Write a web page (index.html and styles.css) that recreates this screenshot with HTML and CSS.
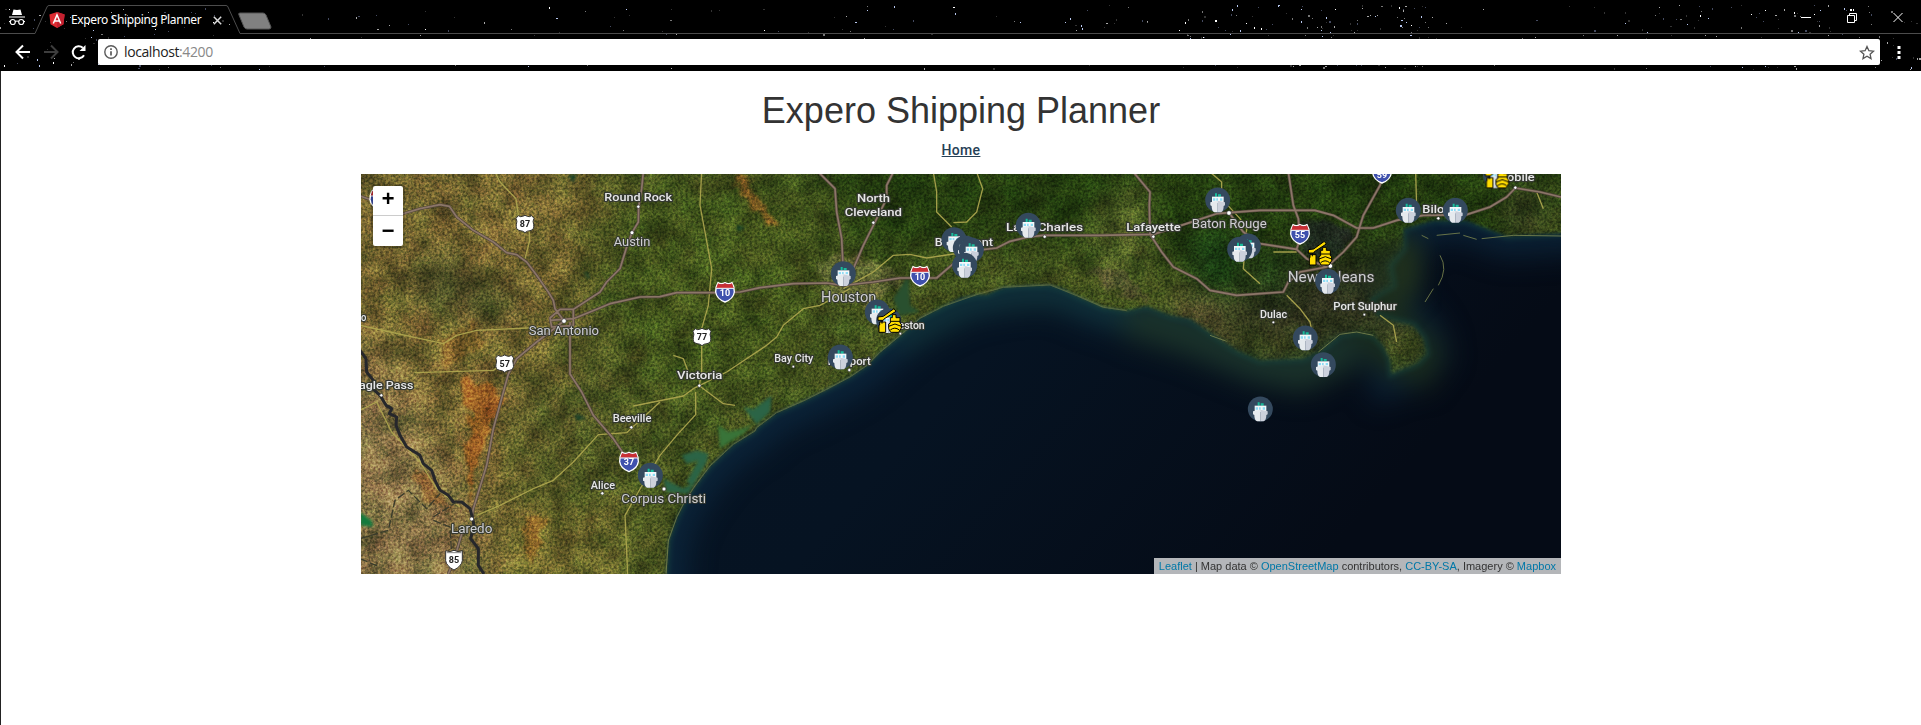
FILE: index.html
```html
<!DOCTYPE html>
<html lang="en">
<head>
<meta charset="utf-8">
<title>Expero Shipping Planner</title>
<link rel="stylesheet" href="styles.css">
</head>
<body>
<header class="browser">
  <svg class="stars" id="stars" width="1921" height="71"></svg>
  <div class="tabstrip">
    <svg class="tab-line" width="1921" height="35"><path d="M0 33.5H35L47 7Q47.500 5.500 49 5.500H226Q227.500 5.500 228 7L240 33.500H1921" fill="none" stroke="#4c4c4c"/></svg>
    <svg class="incognito" width="18" height="18" viewBox="0 0 18 18"><path d="M5.500 0.500 9 1 12.500 0.500 14 6H4ZM1 7.500H17V8.500H1Z" fill="#fff"/><g fill="none" stroke="#fff" stroke-width="1.200"><circle cx="4.800" cy="13" r="2.500"/><circle cx="13.200" cy="13" r="2.500"/><path d="M1 12.500H2.300M7.300 12.500Q9 11.500 10.700 12.500M15.700 12.500H17"/></g></svg>
    <svg class="angular" width="16" height="16" viewBox="0 0 16 16"><path d="M8 0 15.600 2.600 14.500 12.200 8 16 1.500 12.200.4 2.600Z" fill="#dd2b31"/><path d="M8 0 15.600 2.600 14.500 12.200 8 16Z" fill="#c3202f"/><path d="M4.300 11.500 8 3 11.700 11.500M5.800 9H10.200" fill="none" stroke="#fff" stroke-width="1.500"/></svg>
    <span class="tab-title">Expero Shipping Planner</span>
    <svg class="tab-close" width="9" height="9"><path d="M.8.800 8.200 8.200M8.200.800.8 8.200" stroke="#ddd" stroke-width="1.500"/></svg>
    <svg class="new-tab" width="34" height="18"><path d="M2 1H25Q27 1 28 3L33 15Q33 17 31 17H9Q7 17 6 15L1 3Q0 1 2 1Z" fill="#808080" stroke="#555"/></svg>
    <svg class="window-buttons" width="104" height="12" fill="none" stroke="#fff"><path d="M0 5.500H10M46.500 3.500H53.500V10.500H46.500ZM48.500 3V1.500H55.500V8.500H54M92.500 1 101.500 10M101.500 1 92.500 10"/></svg>
  </div>
  <div class="toolbar">
    <svg class="nav" width="76" height="18" fill="none" stroke-width="2"><path d="M15 9H2M8 2.500 1.500 9 8 15.500" stroke="#fff"/><path d="M29 9H42M36 2.500 42.500 9 36 15.500" stroke="#3d3d3d"/><path d="M69 12.200A6 6 0 1 1 67.800 4.800" stroke="#fff"/><path d="M70.500 2V8H64.500Z" fill="#fff"/></svg>
    <div class="omnibox">
      <svg width="14" height="14" fill="none" stroke="#5a5a5a"><circle cx="7" cy="7" r="6.200" stroke-width="1.400"/><path d="M7 6.200V10.500M7 3.200V4.900" stroke-width="1.700"/></svg>
      <span class="url">localhost<span class="port">:4200</span></span>
      <svg class="bookmark" width="16" height="15" viewBox="0 0 16 15"><path d="M8 1.500 9.900 5.700 14.500 6.200 11.100 9.200 12 13.600 8 11.300 4 13.600 4.900 9.200 1.500 6.200 6.100 5.700Z" fill="none" stroke="#555" stroke-width="1.300"/></svg>
    </div>
    <svg class="menu" width="4" height="14"><path d="M.5 1H3.500V4H.5ZM.5 6H3.500V9H.5ZM.5 11H3.500V14H.5Z" fill="#fff"/></svg>
  </div>
</header>

<main class="page">
  <h1>Expero Shipping Planner</h1>
  <nav><a class="home" href="#">Home</a></nav>
  <section class="map">
    <svg class="tiles" width="1200" height="400" viewBox="3 6 3600 1200" color-interpolation-filters="sRGB">
      <defs>
        <filter id="b4" x="-5%" y="-5%" width="110%" height="110%"><feGaussianBlur stdDeviation="4"/></filter>
        <filter id="b10" x="-30%" y="-30%" width="160%" height="160%"><feGaussianBlur stdDeviation="8"/></filter>
        <filter id="b25" x="-30%" y="-30%" width="160%" height="160%"><feGaussianBlur stdDeviation="25"/></filter>
        <filter id="b40" x="-50%" y="-50%" width="200%" height="200%"><feGaussianBlur stdDeviation="40"/></filter>
        <filter id="b80" x="-50%" y="-50%" width="200%" height="200%"><feGaussianBlur stdDeviation="75"/></filter>
        <filter id="grain" x="0" y="0" width="100%" height="100%"><feTurbulence type="fractalNoise" baseFrequency=".13" numOctaves="3" seed="4"/><feColorMatrix values="2 0 0 0 -.5  1.700 .3 0 0 -.5  1.700 0 .3 0 -.5  0 0 0 0 1"/></filter>
        <filter id="patches" x="0" y="0" width="100%" height="100%"><feTurbulence type="fractalNoise" baseFrequency=".014" numOctaves="6" seed="9"/><feColorMatrix values="1.500 .5 0 0 -.47  1.500 0 0 0 -.22  1.500 .3 0 0 -.45  0 0 0 0 1"/></filter>
        <filter id="rough" x="-10%" y="-10%" width="120%" height="120%"><feTurbulence type="fractalNoise" baseFrequency=".03" numOctaves="4" seed="2"/><feDisplacementMap in="SourceGraphic" scale="50" xChannelSelector="R" yChannelSelector="G"/><feGaussianBlur stdDeviation="4"/></filter>
        <linearGradient id="sea" x1="0" x2="1" y2=".3"><stop offset="0" stop-color="#071525"/><stop offset=".6" stop-color="#061322"/><stop offset="1" stop-color="#050b16"/></linearGradient>
        <path id="coast" d="M918 1206 925 1106 950 1036 975 986 1005 941 1050 881 1120 816 1185 776 1190 766 1250 721 1330 686 1400 651 1470 614 1520 580 1560 540 1620 490 1680 438 1750 402 1800 378 1850 367 1880 367 1930 345 2000 340 2070 338 2110 350 2150 370 2230 405 2300 415 2360 402 2430 430 2490 440 2540 475 2630 535 2700 565 2830 560 2880 538 2940 487 2990 480 3040 490 3070 520 3090 560 3095 605 3130 590 3170 575 3200 545 3190 500 3160 460 3100 445 3050 430 3030 380 3100 340 3090 280 3130 230 3130 170 3220 145 3320 145 3390 173 3440 192 3650 180V-50H-50V1250H918Z"/>
        <mask id="land" maskUnits="userSpaceOnUse" x="0" y="0" width="3606" height="1212">
          <use href="#coast" fill="#fff" filter="url(#b4)"/>
          <path d="M3040 250 3280 150 3280 400 3100 420 3000 360Z" opacity=".75" filter="url(#b25)"/>
          <path d="M2380 440 2550 530 2700 590 2850 580 2920 520 3060 510" fill="none" stroke="#000" stroke-width="55" opacity=".5" filter="url(#b25)"/>
          <path d="M3080 620 3180 590 3240 540 3200 440 3060 430" fill="none" stroke="#000" stroke-width="55" opacity=".6" filter="url(#b25)"/>
        </mask>
        <g id="us"><path d="M-20-25Q-13-20-7-23L0-26 7-23Q13-20 20-25L27-17Q22-9 26 2 29 17 15 20 7 20 0 26-7 20-15 20-29 17-26 2-22-9-27-17Z" fill="#fff" stroke="#333" stroke-width="3"/></g>
        <g id="inter"><path d="M-21-28Q-11-22 0-28 11-22 21-28 29-14 28 0 25 21 0 30-25 21-28 0-29-14-21-28Z" fill="#3f51ad" stroke="#fff" stroke-width="4"/><path d="M-21-26Q-11-20 0-26 11-20 21-26L26-12H-26Z" fill="#c92f34"/><path d="M-26-11H26" stroke="#fff" stroke-width="3"/></g>
        <g id="ship"><circle r="37.500" fill="#34495e"/><path d="M-8-20H-2V-10H-8ZM1-17H10V-10H1Z" fill="#1abc9c"/><path d="M-17-10H18V9H-17Z" fill="#f4f8fa"/><path d="M-14-5H-7V2H-14ZM-4-5H1V2H-4ZM7-5H14V2H7Z" fill="#8edcf5"/><path d="M-22 7 0 2V37H-10Q-18 34-18 18L-22 16Z" fill="#e6eaee"/><path d="M22 7 0 2V37H10Q18 34 18 18L22 16Z" fill="#ccd1dc"/></g>
        <g id="crane" stroke="#000" stroke-width="3" fill="#fd0"><path d="M-34-11-18-13 14-36 20-28-16-5-18-1H-34Z"/><path d="M-29 4H-11V35H-31V13H-29Z"/><path d="M-22-1V9" fill="none"/><path d="M9-18H20V-9H32V7L36 10V22L28 35H4L-2 24V10L3 7V-9H9Z"/><path d="M3 2H32M-2 17 17 10 36 17M3 28Q16 17 30 28" fill="none"/></g>
      </defs>
      <rect x="0" width="3606" height="1212" fill="url(#sea)"/>
      <g fill="none" filter="url(#b40)">
        <use href="#coast" stroke="#0f3048" stroke-width="130" opacity=".55"/>
        <path d="M1600 510 1850 380 2080 360 2300 430" stroke="#16403c" stroke-width="90" opacity=".5"/>
        <path d="M2300 430 2500 490 2700 570 2820 595 2980 520" stroke="#1d3629" stroke-width="130" opacity=".85"/>
        <path d="M3080 190 3030 430 3150 550 3120 620" stroke="#1c2d1c" stroke-width="180" opacity=".9"/>
      </g>
      <path d="M3050 230 3170 200 3180 340 3070 440Z" fill="#20301d" filter="url(#b40)"/>
      <use href="#coast" fill="none" stroke="#1d4f46" stroke-width="22" filter="url(#b10)" opacity=".4"/>
      <g mask="url(#land)">
        <rect width="3606" height="1212" fill="#414f1e"/>
        <g filter="url(#b80)">
          <path d="M-100-100H750L650 400 600 720 400 1300H-100Z" fill="#706230"/>
          <path d="M-100 500 100 600 330 1020 350 1300H-100Z" fill="#837048"/>
          <path d="M450 1000H820L800 1300H400Z" fill="#6c672e"/>
          <path d="M520 570 820 560 800 900 430 930Z" fill="#505525"/>
          <path d="M1350-100H3700V220L2600 300 1900 200 1500 280Z" fill="#21390f"/>
          <path d="M2850 250H3150V520H2700L2450 430Z" fill="#292d1c"/>
          <path d="M750 100 1100 0 1400 100 1300 600 850 700Z" fill="#40521c"/>
        </g>
        <g filter="url(#b40)">
          <path d="M140 290 250 230 400 340 540 400 400 450 180 410Z" fill="#404422" opacity=".85"/>
          <path d="M2250 60 2370 40 2360 360 2220 350 2180 180Z" fill="#4e5d26"/>
          <path d="M2420 350 2540 400 2640 480 2520 470Z" fill="#5c4a33"/>
          <path d="M2480 180 2620 170 2650 360 2500 350Z" fill="#183b13"/>
          <path d="M3460 40 3500 40 3530 190 3440 190Z" fill="#343620"/>
          <path d="M3540 60H3600V180H3550Z" fill="#4f5a28"/>
          <path d="M2700 250 2780 250 2760 360 2690 340Z" fill="#1b4015"/>
        </g>
        <g filter="url(#rough)">
          <path d="M1370 270 1480 250 1540 270 1600 290 1640 350 1590 350 1540 410 1460 380 1400 360Z" fill="#86824f" opacity=".45"/>
          <path d="M2830 150 2900 145 2960 165 2980 190 2930 245 2890 260 2830 235 2810 190Z" fill="#1f2b20"/>
          <path d="M305 625 400 640 430 690 390 770 350 880 330 1000 320 850 335 740 310 690Z" fill="#9c5a22" opacity=".8"/>
          <path d="M155 880 210 910 270 1010 190 980Z" fill="#95592a" opacity=".55"/>
          <path d="M490 1040 560 1030 520 1180 490 1130Z" fill="#94551f" opacity=".45"/>
          <path d="M1125 0 1150 80 1190 115 1220 150 1250 160 1240 135 1195 90 1155 10Z" fill="#8b5a23" opacity=".7"/>
          <path d="M240 500 340 450 370 520 250 600Z" fill="#865a26" opacity=".45"/>
          <path d="M2180 290 2300 300 2370 390 2250 360Z" fill="#4a4030" opacity=".5"/>
        </g>
        <rect class="patches" width="3606" height="1212" filter="url(#patches)"/>
        <rect class="grain" width="3606" height="1212" filter="url(#grain)"/>
        <g fill="#2b6446" filter="url(#b4)">
          <path d="M1150 705 1180 712 1235 670 1230 720 1190 757Z"/><path d="M1075 760 1105 780 1150 770 1180 755 1150 785 1110 810 1080 830Z" fill="#397439"/>
          <path d="M965 850 1010 835 1045 845 1040 870 1000 940 980 930 1015 865 980 875Z"/><path d="M910 920 970 950 1005 930 985 965 920 960Z"/>
          <path d="M1600 380 1645 310 1650 400 1680 420 1620 430Z" fill="#29502f"/><path d="M0 1020 35 1045 40 1065 0 1060Z" fill="#137a3d"/><path d="M625 10 650 5 640 32ZM645 725 680 738 650 745ZM1130 160 1155 165 1135 178ZM670 295 690 310 685 322Z" fill="#153e28"/>
        </g>
      </g>
      <path d="M918 1206 925 1106 950 1036 975 986 1005 941 1050 881 1120 816 1185 776 1190 766 1250 721 1330 686 1400 651 1470 614 1520 580 1560 540 1620 490 1680 438 1750 402 1850 367 1930 345 2070 338 2150 370 2230 405 2300 415" class="shore"/>
      <path d="M2875 540 2940 487 2990 480 3040 490M3185 190 3205 200M3230 190 3300 183M3310 190 3350 202M3365 200 3460 190 3603 192M3240 250Q3265 290 3235 340M3220 350 3195 390M2550 490 2600 508" class="shore"/>

      <g class="road minor">
        <path d="M405 0 420 30 468 80 475 130 508 180 508 210 495 260M0 460 90 480 250 515 290 490 350 475 500 468 560 465M165 602 400 595 430 575M1025 0 1020 100 1035 180 1055 290 1045 400 1025 470 1025 600 1018 641M820 702 970 672 1000 650 1018 641 1090 695 1125 700M1007 660V728L950 790 900 850 840 951 795 1030 803 1206M350 1030 420 1000 520 950 580 925 640 870 715 788 800 782 900 690"/>
        <path d="M0 715 50 690 95 780 180 870 230 950 300 1005M1450 350 1540 300 1600 250 1650 247 1700 258 1800 243M1470 350 1380 400 1330 410 1270 460 1250 495 1220 520 1100 600 1018 641M940 550 970 560 985 600M1720 0 1730 60V120L1775 165M1850 0 1868 50 1850 120 1820 150 1780 152M2550 0 2585 30V80L2640 140 2660 170 2650 290 2700 335M3167 0 3170 110M2740 240H2810M2780 370 2820 410 2850 450 2860 500M3060 430 3100 460 3110 510M3530 60 3550 110"/>
      </g>
      <g class="road case"><path id="major" d="M0 72 60 92 130 125 180 110 240 98 268 103 290 135 340 175 400 210 440 242 470 248 500 270 530 310 565 360 580 385 585 410 612 447M850 0 845 50 836 104 835 150 816 182 800 225 780 290 740 330 720 360 640 412H600L570 438 575 465 640 460V412M570 445 640 440 690 420 750 395 840 375 900 374 950 362 1060 362 1140 360 1200 347 1300 335 1400 333 1450 340 1540 330 1620 318H1730L1780 275 1850 235 1910 228 1950 208 2005 195 2050 190H2220L2380 187 2480 155 2570 125 2607 122 2700 115H2865L2920 130 2990 168H3040L3110 145 3190 130 3320 128 3390 105 3440 75 3466 48 3540 60 3603 75M2320 0 2370 60 2368 100 2370 187 2405 240 2440 285 2510 320 2550 355 2630 370 2700 365 2770 360 2785 330 2820 300 2900 285M2607 122 2650 180 2700 215 2810 232 2840 260 2900 285 2950 240 2990 195 2998 168 3010 130 3060 40 3070 0M2785 0 2800 100 2815 140 2820 200 2810 232M630 450V606L665 660 700 730 760 800 807 869M612 447 530 510 470 560 445 606 400 770 380 880 340 1010 335 1040M310 1070 282 1163 265 1206M1375 0 1425 50 1430 120 1445 200 1450 300M1600 0 1580 40V80L1540 160 1510 220 1480 290"/></g>
      <use href="#major" class="road major"/>
      <path class="road river" d="M0 535 18 560 20 600 40 625 38 650 60 670 78 700 95 710 88 725 110 735 108 760 120 790 140 825 180 850 190 875 215 895 225 925 240 955 265 970 280 990 305 990 330 1010 338 1040 342 1060 332 1100 355 1130 355 1180 372 1206"/>
      <path d="M0 1100 85 1075 105 985 145 955 200 1010 240 965M220 1035 290 990M220 1045 270 1065 275 1150M0 1160 60 1185" fill="none" stroke="#393b2b" stroke-width="4" stroke-dasharray="24 8"/>

      <g class="dots"><circle cx="835" cy="104" r="5"/><circle cx="816" cy="182" r="6"/><circle cx="612" cy="447" r="7"/><circle cx="64" cy="670" r="5"/><circle cx="335" cy="1041" r="6"/><circle cx="814" cy="766" r="5"/><circle cx="727" cy="964" r="5"/><circle cx="912" cy="951" r="6"/><circle cx="1018" cy="641" r="5"/><circle cx="1540" cy="152" r="5"/><circle cx="1300" cy="584" r="4"/><circle cx="1468" cy="594" r="5"/><circle cx="1621" cy="485" r="4"/><circle cx="2054" cy="194" r="5"/><circle cx="2380" cy="194" r="5"/><circle cx="2607" cy="123" r="7"/><circle cx="2911" cy="282" r="7"/><circle cx="3235" cy="139" r="5"/><circle cx="3466" cy="47" r="5"/><circle cx="3013" cy="428" r="4"/><circle cx="2740" cy="451" r="4"/></g>
      <g class="town">
        <text x="733" y="87" textLength="203" lengthAdjust="spacingAndGlyphs">Round Rock</text><text x="1491" y="89" textLength="99" lengthAdjust="spacingAndGlyphs">North</text><text x="1454" y="133" textLength="172" lengthAdjust="spacingAndGlyphs">Cleveland</text>
        <text x="-70" y="447" textLength="89" lengthAdjust="spacingAndGlyphs">Del Rio</text><text x="-24" y="652" textLength="184" lengthAdjust="spacingAndGlyphs">Eagle Pass</text><text x="758" y="750" textLength="116" lengthAdjust="spacingAndGlyphs">Beeville</text><text x="692" y="951" textLength="73" lengthAdjust="spacingAndGlyphs">Alice</text>
        <text x="951" y="620" textLength="136" lengthAdjust="spacingAndGlyphs">Victoria</text><text x="1243" y="570" textLength="117" lengthAdjust="spacingAndGlyphs">Bay City</text><text x="1403" y="578" textLength="129" lengthAdjust="spacingAndGlyphs">Freeport</text><text x="1554" y="470" textLength="140" lengthAdjust="spacingAndGlyphs">Galveston</text>
        <text x="1724" y="221" textLength="175" lengthAdjust="spacingAndGlyphs">Beaumont</text><text x="1938" y="177" textLength="231" lengthAdjust="spacingAndGlyphs">Lake Charles</text><text x="2299" y="177" textLength="163" lengthAdjust="spacingAndGlyphs">Lafayette</text>
        <text x="3187" y="123" textLength="94" lengthAdjust="spacingAndGlyphs">Biloxi</text><text x="3408" y="27" textLength="116" lengthAdjust="spacingAndGlyphs">Mobile</text><text x="2920" y="414" textLength="190" lengthAdjust="spacingAndGlyphs">Port Sulphur</text><text x="2700" y="437" textLength="81" lengthAdjust="spacingAndGlyphs">Dulac</text>
      </g>
      <g class="city">
        <text x="761" y="222" textLength="110" lengthAdjust="spacingAndGlyphs">Austin</text><text x="506" y="488" textLength="211" lengthAdjust="spacingAndGlyphs">San Antonio</text><text x="273" y="1084" textLength="124" lengthAdjust="spacingAndGlyphs">Laredo</text><text x="784" y="994" textLength="254" lengthAdjust="spacingAndGlyphs">Corpus Christi</text><text x="2495" y="167" textLength="225" lengthAdjust="spacingAndGlyphs">Baton Rouge</text>
        <text class="metro" x="1383" y="390" textLength="166" lengthAdjust="spacingAndGlyphs">Houston</text><text class="metro" x="2783" y="331" textLength="260" lengthAdjust="spacingAndGlyphs">New Orleans</text>
      </g>
      <g class="shield">
        <use href="#us" x="495" y="156"/><text x="495" y="165">87</text><use href="#us" x="434" y="575"/><text x="434" y="584">57</text><use href="#us" x="1026" y="495"/><text x="1026" y="503">77</text>
        <path d="M257 1136Q270 1142 282 1135 294 1142 307 1136V1166Q305 1182 282 1194 259 1182 257 1166Z" fill="#fff" stroke="#333" stroke-width="3"/><path d="M260 1142H304" stroke="#444" stroke-width="2"/><text x="282" y="1172">85</text>
      </g>
      <g class="shield light">
        <use href="#inter" x="1095" y="360"/><text x="1095" y="371">10</text><use href="#inter" x="1680" y="312"/><text x="1680" y="324">10</text><use href="#inter" x="2820" y="186"/><text x="2820" y="198">55</text><use href="#inter" x="3066" y="3"/><text x="3066" y="18">59</text><use href="#inter" x="807" y="869"/><text x="807" y="880">37</text><use href="#inter" x="58" y="83"/>
      </g>
      <g transform="translate(0 -1)">
        <use href="#ship" x="871" y="911"/><use href="#ship" x="1450" y="306"/><use href="#ship" x="1552" y="421"/><use href="#ship" x="1586" y="447"/><use href="#ship" x="1441" y="556"/><use href="#ship" x="1782" y="204"/><use href="#ship" x="1816" y="229"/><use href="#ship" x="1834" y="235"/><use href="#ship" x="1814" y="281"/><use href="#ship" x="2005" y="161"/><use href="#ship" x="2573" y="85"/><use href="#ship" x="2665" y="223"/><use href="#ship" x="2639" y="233"/><use href="#ship" x="3145" y="116"/><use href="#ship" x="3286" y="116"/><use href="#ship" x="2903" y="329"/><use href="#ship" x="2836" y="499"/><use href="#ship" x="2890" y="579"/><use href="#ship" x="2701" y="712"/><use href="#ship" x="3408" y="12"/>
        <use href="#crane" x="1588" y="447"/><use href="#crane" x="2879" y="245"/><use href="#crane" x="3410" y="14"/>
      </g>
    </svg>
    <div class="zoom"><a>+</a><a>&#8722;</a></div>
    <div class="credit"><a>Leaflet</a> | Map data © <a>OpenStreetMap</a> contributors, <a>CC-BY-SA</a>, Imagery © <a>Mapbox</a></div>
  </section>
</main>
<script src="stars.js"></script>
</body>
</html>
```
FILE: styles.css
```css
* { box-sizing: border-box; }
body { margin: 0; background: #fff; color: #333; font-family: "Liberation Sans", Arial, sans-serif; height: 725px; overflow: hidden; }
svg { display: block; flex: none; }
.browser { position: relative; height: 71px; background: #000; color: #fff; }
.stars { position: absolute; inset: 0; }
.tabstrip { position: relative; display: flex; align-items: flex-start; height: 34px; padding-left: 8px; }
.tab-line { position: absolute; left: 0; top: 0; }
.incognito { margin-top: 9px; }
.angular { margin: 12px 0 0 23px; }
.tab-title { margin: 11px 0 0 6px; width: 131px; font: 12px/18px "Noto Sans", sans-serif; letter-spacing: -.37px; white-space: nowrap; }
.tab-close { margin: 16px 0 0 11px; }
.new-tab { margin: 12px 0 0 16px; }
.window-buttons { margin: 12px 16px 0 auto; }
.toolbar { position: relative; display: flex; align-items: center; height: 37px; padding: 0 20px 1px 15px; }
.nav { margin-right: 7px; }
.omnibox { display: flex; flex: none; align-items: center; width: 1782px; height: 26px; padding: 0 5px 0 6px; border-radius: 2px; background: #fff; }
.url { margin-left: 6px; color: #222; font: 14px/20px "Open Sans", sans-serif; letter-spacing: -.4px; }
.port { color: #888; }
.bookmark { margin-left: auto; }
.menu { margin-left: 17px; }
.page { height: 654px; border-left: 1px solid #222; text-align: center; }
h1 { margin: 0; padding-top: 20px; font-size: 36px; font-weight: 400; line-height: 40px; }
nav { height: 43px; padding-top: 9px; }
.home { color: #264056; font: 500 14px/20px Roboto, sans-serif; letter-spacing: .3px; text-decoration: underline; }
.map { position: relative; width: 1200px; height: 400px; margin: 0 auto; overflow: hidden; text-align: left; }
.tiles { isolation: isolate; }
.patches { mix-blend-mode: overlay; opacity: .32; }
.grain { mix-blend-mode: overlay; opacity: .36; }
.shore { fill: none; stroke: #7f8a50; stroke-width: 3; opacity: .8; }
.road { fill: none; stroke-linejoin: round; }
.minor { stroke: #b0a850; stroke-width: 4; opacity: .9; }
.case { stroke: #51453a; stroke-width: 9; }
.major { stroke: #8c7668; stroke-width: 5; }
.river { stroke: #26272b; stroke-width: 9; }
.dots { fill: #fff; stroke: #333; stroke-width: 2; }
.town, .city { fill: #e7e7e7; stroke: #343830; stroke-width: 7; paint-order: stroke; font-family: Roboto, sans-serif; font-weight: 500; font-size: 33px; stroke-linejoin: round; }
.city { fill: #cfcfd1; font-weight: 400; font-size: 41px; stroke-width: 6; }
.city .metro { font-size: 43px; }
.shield { fill: #222; font: 700 27px Roboto, sans-serif; text-anchor: middle; }
.light { fill: #fff; }
.zoom { position: absolute; left: 10px; top: 10px; border: 2px solid rgba(0,0,0,.2); border-radius: 4px; background: #fff; background-clip: padding-box; }
.zoom a { display: block; width: 30px; height: 30px; color: #000; font: bold 22px/30px "Liberation Mono", monospace; text-align: center; }
.zoom a:first-child { border-bottom: 1px solid #ccc; }
.zoom a:last-child { line-height: 33px; }
.credit { position: absolute; right: 0; bottom: 0; height: 16px; padding: 0 5px; background: rgba(255,255,255,.7); color: #333; font-size: 11px; line-height: 16px; white-space: nowrap; }
.credit a { color: #0078a8; }
```
FILE: stars.js
```js
// Starfield behind the tab strip: a seeded scatter, denser towards the right.
const bands = [[0, 235, 5, 70, 90], [235, 480, 5, 70, 30], [480, 700, 5, 70, 30], [700, 1060, 5, 70, 50], [1060, 1300, 5, 70, 100], [1300, 1440, 5, 70, 130], [1440, 1640, 5, 70, 35], [1640, 1920, 5, 70, 130]];
const colors = ["#333", "#444a60", "#777", "#a9a9a9", "#b8c8f0", "#fff"];
let seed = 71;
const rand = () => (seed = (seed * 16807) % 2147483647) / 2147483647;
let out = "";
for (const [x0, x1, y0, y1, n] of bands) {
  for (let i = 0; i < n; i++) {
    const x = Math.floor(x0 + rand() * (x1 - x0));
    const y = Math.floor(y0 + rand() * (y1 - y0));
    const c = colors[Math.floor(Math.pow(rand(), 1.5) * 6)];
    const s = rand() > 0.8 ? 2 : 1;
    out += `<rect x="${x}" y="${y}" width="${s}" height="${rand() > 0.7 ? 2 : 1}" fill="${c}"/>`;
  }
}
document.getElementById("stars").innerHTML = out;
```
